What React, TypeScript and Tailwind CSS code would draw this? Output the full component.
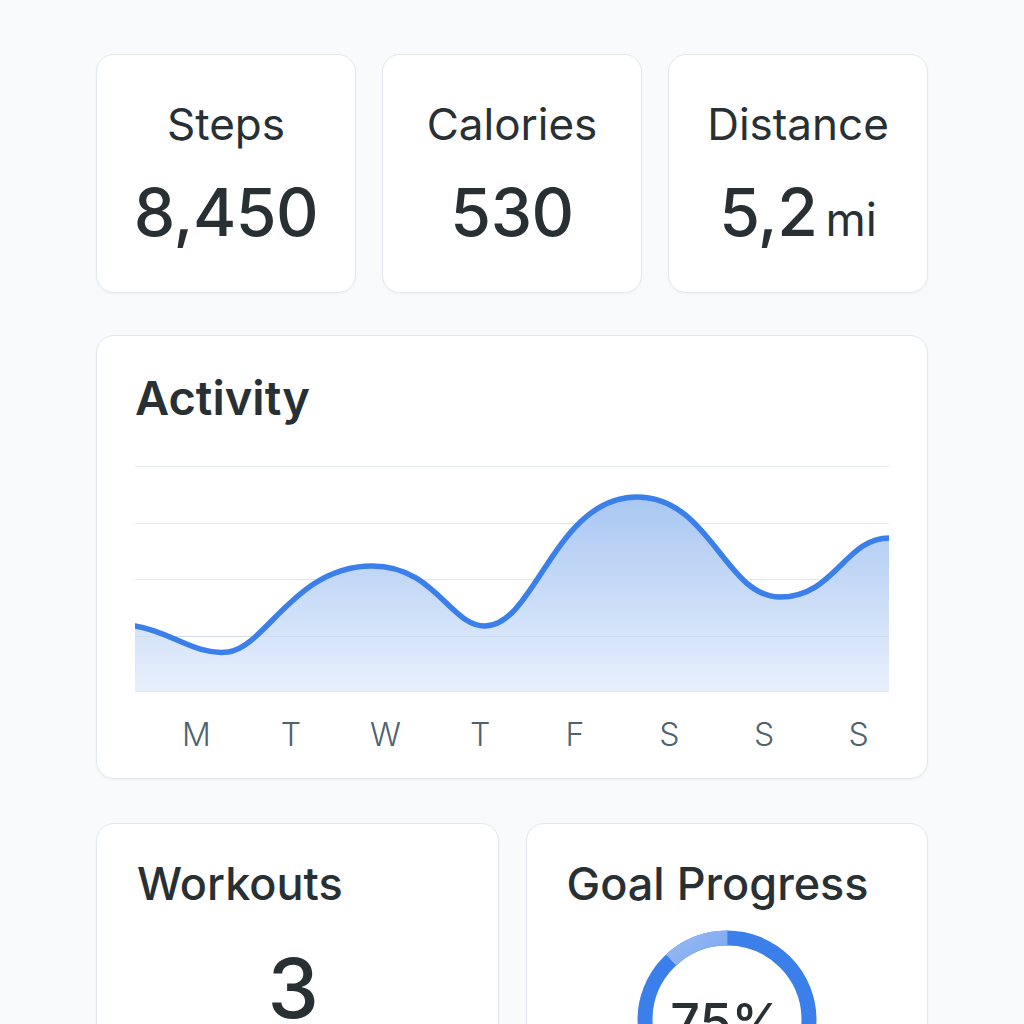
const days = ["M", "T", "W", "T", "F", "S", "S", "S"];

const linePath =
  "M0 160 C 35 165, 60 190, 93 186 C 130 182, 160 100, 237 100 C 300 100, 315 160, 350 160 C 400 160, 420 31, 502 31 C 575 31, 590 131, 645 131 C 700 131, 710 72, 754 72";

function StatCard({ label, value, unit }: { label: string; value: string; unit?: string }) {
  return (
    <div className="flex h-[239px] flex-col items-center rounded-[18px] border border-[#e3e8ef] bg-white pt-[47px] shadow-[0_1px_3px_rgba(15,23,42,0.04)]">
      <div className="text-[44px] leading-none font-normal text-[#283034]">{label}</div>
      <div className="mt-[33px] flex items-baseline gap-2 text-[#283034]">
        <span className="text-[66px] leading-none font-medium tracking-[-0.5px]">{value}</span>
        {unit && <span className="text-[46px] leading-none font-normal">{unit}</span>}
      </div>
    </div>
  );
}

function ActivityChart() {
  return (
    <svg width="754" height="226" viewBox="0 0 754 226" className="block">
      <defs>
        <linearGradient id="fill" x1="0" y1="0" x2="0" y2="1">
          <stop offset="0%" stopColor="#a9c7f2" />
          <stop offset="100%" stopColor="#e8f0fc" />
        </linearGradient>
      </defs>
      {[0, 57, 113, 170].map((y) => (
        <line key={y} x1="0" x2="754" y1={y + 0.5} y2={y + 0.5} stroke="#e2e7ee" strokeWidth="1" />
      ))}
      <path d={`${linePath} L 754 225 L 0 225 Z`} fill="url(#fill)" />
      <line x1="0" x2="754" y1="225.5" y2="225.5" stroke="#dfe5ee" strokeWidth="1" />
      <line x1="0" x2="754" y1="170.5" y2="170.5" stroke="#c9d6e8" strokeOpacity="0.6" strokeWidth="1" />
      <path d={linePath} fill="none" stroke="#3b7fea" strokeWidth="5.5" strokeLinecap="round" />
    </svg>
  );
}

function ProgressRing() {
  const r = 82;
  const c = 2 * Math.PI * r;
  return (
    <div className="relative h-[180px] w-[180px]">
      <svg width="180" height="180" viewBox="0 0 180 180" className="absolute inset-0">
        <defs>
          <linearGradient id="ringfade" x1="0" y1="0" x2="1" y2="0">
            <stop offset="0%" stopColor="#3b7fea" />
            <stop offset="100%" stopColor="#8fb4f3" />
          </linearGradient>
        </defs>
        <circle cx="90" cy="90" r={r} fill="none" stroke="#3b7fea" strokeWidth="15" />
        <circle
          cx="90"
          cy="90"
          r={r}
          fill="none"
          stroke="url(#ringfade)"
          strokeWidth="15"
          strokeDasharray={`${c * 0.12} ${c}`}
          transform="rotate(-133 90 90)"
        />
      </svg>
      <div className="absolute inset-0 flex items-center justify-center pt-[6px] text-[52px] leading-none font-medium text-[#283034]">
        75%
      </div>
    </div>
  );
}

export default function App() {
  return (
    <div className="min-h-screen bg-[#f9fafb] font-['Inter',sans-serif]">
      <div className="mx-auto w-[832px] pt-[54px]">
        <div className="grid grid-cols-3 gap-[26px]">
          <StatCard label="Steps" value="8,450" />
          <StatCard label="Calories" value="530" />
          <StatCard label="Distance" value="5,2" unit="mi" />
        </div>

        <div className="mt-[42px] rounded-[18px] border border-[#e3e8ef] bg-white px-[38px] pt-[38px] pb-[27px] shadow-[0_1px_3px_rgba(15,23,42,0.04)]">
          <h2 className="text-[47px] leading-none font-semibold text-[#283034]">Activity</h2>
          <div className="mt-[45px]">
            <ActivityChart />
          </div>
          <div className="mt-[27px] ml-[14px] grid w-[757px] grid-cols-8 text-center text-[32px] leading-none font-light text-[#4f636e]">
            {days.map((d, i) => (
              <span key={i}>{d}</span>
            ))}
          </div>
        </div>

        <div className="mt-[44px] grid grid-cols-2 gap-[27px]">
          <div className="h-[260px] rounded-[18px] border border-[#e3e8ef] bg-white px-[40px] pt-[37px] shadow-[0_1px_3px_rgba(15,23,42,0.04)]">
            <h3 className="text-[45px] leading-none font-medium text-[#283034]">Workouts</h3>
            <div className="mt-[42px] pr-[8px] text-center text-[82px] leading-none font-medium text-[#283034]">3</div>
          </div>
          <div className="h-[260px] rounded-[18px] border border-[#e3e8ef] bg-white px-[40px] pt-[37px] shadow-[0_1px_3px_rgba(15,23,42,0.04)]">
            <h3 className="text-[45px] leading-none font-medium text-[#283034]">Goal Progress</h3>
            <div className="mt-[24px] flex justify-center">
              <ProgressRing />
            </div>
          </div>
        </div>
      </div>
    </div>
  );
}
